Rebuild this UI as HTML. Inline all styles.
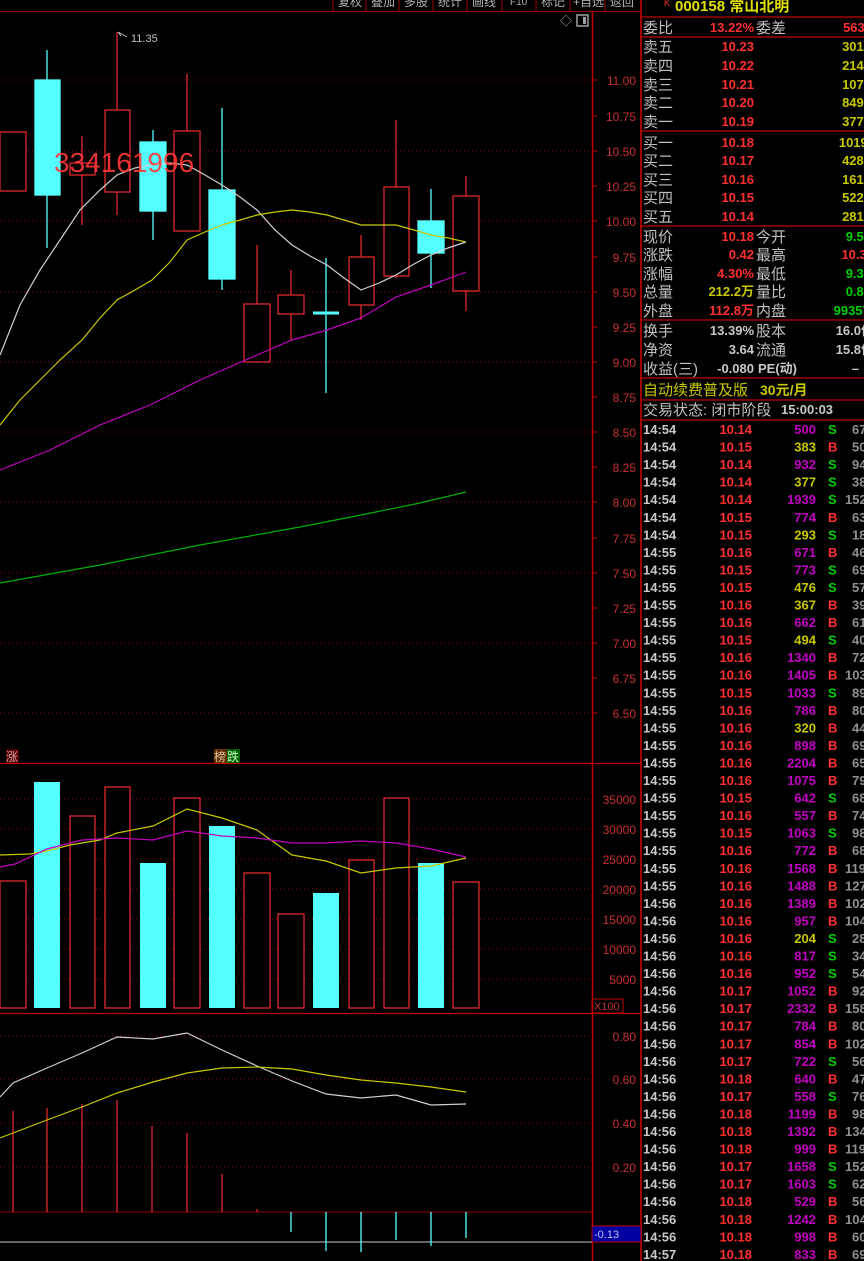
<!DOCTYPE html>
<html><head><meta charset="utf-8"><style>
html,body{margin:0;padding:0;background:#000;width:864px;height:1261px;overflow:hidden}
svg{display:block}
text{font-family:"Liberation Sans","Noto Sans CJK SC",sans-serif}
.ax{fill:#c83030;font-size:12px;text-anchor:end}
.lb{fill:#c0c0c0;font-size:15px}
.n{font-size:13px;font-weight:bold}
.r{fill:#ff3030}.y{fill:#c8c800}.g{fill:#00d000}.w{fill:#c8c8c8}.m{fill:#c000c0}
.e{text-anchor:end}
</style></head><body>
<svg width="864" height="1261" viewBox="0 0 864 1261" xmlns="http://www.w3.org/2000/svg">
<rect width="864" height="1261" fill="#000"/>
<!-- toolbar -->
<g stroke="#a00000" stroke-width="1">
<line x1="333" y1="0" x2="333" y2="11"/><line x1="366" y1="0" x2="366" y2="11"/><line x1="399" y1="0" x2="399" y2="11"/><line x1="433" y1="0" x2="433" y2="11"/><line x1="467" y1="0" x2="467" y2="11"/><line x1="502" y1="0" x2="502" y2="11"/><line x1="536" y1="0" x2="536" y2="11"/><line x1="570" y1="0" x2="570" y2="11"/><line x1="605" y1="0" x2="605" y2="11"/>
<line x1="0" y1="11.5" x2="641" y2="11.5"/>
</g>
<g fill="#b0b0b0" font-size="12"><text x="338" y="6">复权</text><text x="371" y="6">叠加</text><text x="404" y="6">多股</text><text x="438" y="6">统计</text><text x="472" y="6">画线</text><text x="510" y="5" font-size="10">F10</text><text x="541" y="6">标记</text><text x="573" y="6">+自选</text><text x="610" y="6">返回</text></g>
<text x="560" y="25" fill="#a0a0a0" font-size="12">◇</text>
<rect x="577" y="15" width="11" height="11" fill="none" stroke="#a0a0a0" stroke-width="1.5"/><rect x="583" y="17" width="3" height="7" fill="#a0a0a0"/>
<!-- main axis -->
<line x1="592.5" y1="12" x2="592.5" y2="1261" stroke="#c00000" stroke-width="1.5"/>
<line x1="641" y1="0" x2="641" y2="1261" stroke="#a00000" stroke-width="2"/>
<!-- price grid -->
<g stroke="#900000" stroke-dasharray="1,3">
<line x1="0" y1="80" x2="592" y2="80"/><line x1="0" y1="151" x2="592" y2="151"/><line x1="0" y1="221" x2="592" y2="221"/><line x1="0" y1="292" x2="592" y2="292"/><line x1="0" y1="362" x2="592" y2="362"/><line x1="0" y1="432" x2="592" y2="432"/><line x1="0" y1="502" x2="592" y2="502"/><line x1="0" y1="573" x2="592" y2="573"/><line x1="0" y1="643" x2="592" y2="643"/><line x1="0" y1="713" x2="592" y2="713"/>
</g>
<g class="ax">
<text x="636" y="85">11.00</text><text x="636" y="121">10.75</text><text x="636" y="156">10.50</text><text x="636" y="191">10.25</text><text x="636" y="226">10.00</text><text x="636" y="262">9.75</text><text x="636" y="297">9.50</text><text x="636" y="332">9.25</text><text x="636" y="367">9.00</text><text x="636" y="402">8.75</text><text x="636" y="437">8.50</text><text x="636" y="472">8.25</text><text x="636" y="507">8.00</text><text x="636" y="543">7.75</text><text x="636" y="578">7.50</text><text x="636" y="613">7.25</text><text x="636" y="648">7.00</text><text x="636" y="683">6.75</text><text x="636" y="718">6.50</text>
</g>
<g stroke="#c00000"><line x1="592" y1="80" x2="597" y2="80"/><line x1="592" y1="116" x2="597" y2="116"/><line x1="592" y1="151" x2="597" y2="151"/><line x1="592" y1="186" x2="597" y2="186"/><line x1="592" y1="221" x2="597" y2="221"/><line x1="592" y1="257" x2="597" y2="257"/><line x1="592" y1="292" x2="597" y2="292"/><line x1="592" y1="327" x2="597" y2="327"/><line x1="592" y1="362" x2="597" y2="362"/><line x1="592" y1="397" x2="597" y2="397"/><line x1="592" y1="432" x2="597" y2="432"/><line x1="592" y1="467" x2="597" y2="467"/><line x1="592" y1="502" x2="597" y2="502"/><line x1="592" y1="538" x2="597" y2="538"/><line x1="592" y1="573" x2="597" y2="573"/><line x1="592" y1="608" x2="597" y2="608"/><line x1="592" y1="643" x2="597" y2="643"/><line x1="592" y1="678" x2="597" y2="678"/><line x1="592" y1="713" x2="597" y2="713"/></g>
<!-- candles -->
<g stroke="#e02828" stroke-width="1.3" fill="#000">
<rect x="0" y="132" width="26" height="59"/>
<line x1="82" y1="136" x2="82" y2="225"/><rect x="70" y="163" width="25" height="12"/>
<line x1="117" y1="32" x2="117" y2="215"/><rect x="105" y="110" width="25" height="82"/>
<line x1="187" y1="74" x2="187" y2="231"/><rect x="174" y="131" width="26" height="100"/>
<line x1="257" y1="245" x2="257" y2="363"/><rect x="244" y="304" width="26" height="58"/>
<line x1="291" y1="270" x2="291" y2="340"/><rect x="278" y="295" width="26" height="19"/>
<line x1="361" y1="235" x2="361" y2="320"/><rect x="349" y="257" width="25" height="48"/>
<line x1="396" y1="120" x2="396" y2="278"/><rect x="384" y="187" width="25" height="89"/>
<line x1="466" y1="176" x2="466" y2="311"/><rect x="453" y="196" width="26" height="95"/>
</g>
<g stroke="#54ffff" stroke-width="1.3" fill="#54ffff">
<line x1="47" y1="50" x2="47" y2="248"/><rect x="35" y="80" width="25" height="115"/>
<line x1="153" y1="130" x2="153" y2="240"/><rect x="140" y="142" width="26" height="69"/>
<line x1="222" y1="108" x2="222" y2="290"/><rect x="209" y="190" width="26" height="89"/>
<line x1="326" y1="258" x2="326" y2="393"/><line x1="313" y1="313" x2="339" y2="313" stroke-width="3"/>
<line x1="431" y1="189" x2="431" y2="288"/><rect x="418" y="221" width="26" height="32"/>
</g>
<!-- MAs -->
<g fill="none" stroke-width="1.2">
<polyline stroke="#d0d0d0" points="0,355 20,305 40,270 60,240 80,210 100,190 117,175 135,168 150,165 170,163 187,165 205,175 222,185 240,197 257,210 275,230 292,245 310,256 327,265 344,278 361,290 379,283 396,275 414,264 431,255 448,248 466,242"/>
<polyline stroke="#c8c800" points="0,425 20,400 40,380 60,360 82,340 100,318 117,300 135,290 152,280 170,262 187,240 205,232 222,225 240,220 257,215 275,212 292,210 310,212 327,215 344,220 361,225 379,225 396,225 414,230 431,235 448,238 466,242"/>
<polyline stroke="#c000c0" points="0,470 50,450 100,425 150,405 200,380 257,355 292,340 327,330 361,318 396,297 431,285 466,272"/>
<polyline stroke="#00b000" points="0,583 100,565 200,545 300,527 361,515 420,503 466,492"/>
</g>
<path d="M118 32 L121 36 M118 32 L127 37" stroke="#c0c0c0" fill="none"/>
<text x="131" y="42" fill="#c0c0c0" font-size="11">11.35</text>
<text x="54" y="172" fill="#ff3838" font-size="28" opacity="0.9">334161996</text>
<!-- volume panel -->
<line x1="0" y1="763.5" x2="641" y2="763.5" stroke="#c00000" stroke-width="1.2"/>
<line x1="0" y1="1013.5" x2="641" y2="1013.5" stroke="#c00000" stroke-width="1.2"/>
<rect x="6" y="749" width="13" height="14" fill="#500000"/><text x="6" y="761" fill="#e0a0a0" font-size="12">涨</text>
<rect x="214" y="749" width="13" height="14" fill="#603000"/><text x="214" y="761" fill="#e0c0a0" font-size="12">榜</text>
<rect x="227" y="749" width="13" height="14" fill="#006000"/><text x="227" y="761" fill="#c0ffc0" font-size="12">跌</text>
<g stroke="#900000" stroke-dasharray="1,3">
<line x1="0" y1="799" x2="592" y2="799"/><line x1="0" y1="829" x2="592" y2="829"/><line x1="0" y1="859" x2="592" y2="859"/><line x1="0" y1="889" x2="592" y2="889"/><line x1="0" y1="919" x2="592" y2="919"/><line x1="0" y1="949" x2="592" y2="949"/><line x1="0" y1="979" x2="592" y2="979"/>
</g>
<g class="ax"><text x="636" y="804">35000</text><text x="636" y="834">30000</text><text x="636" y="864">25000</text><text x="636" y="894">20000</text><text x="636" y="924">15000</text><text x="636" y="954">10000</text><text x="636" y="984">5000</text></g>
<rect x="592" y="999" width="31" height="14" fill="none" stroke="#c00000"/><text x="594" y="1010" fill="#c03030" font-size="11">X100</text>
<g stroke="#e02828" stroke-width="1.3" fill="#000">
<rect x="0" y="881" width="26" height="127"/><rect x="70" y="816" width="25" height="192"/><rect x="105" y="787" width="25" height="221"/><rect x="174" y="798" width="26" height="210"/><rect x="244" y="873" width="26" height="135"/><rect x="278" y="914" width="26" height="94"/><rect x="349" y="860" width="25" height="148"/><rect x="384" y="798" width="25" height="210"/><rect x="453" y="882" width="26" height="126"/>
</g>
<g fill="#54ffff"><rect x="34" y="782" width="26" height="226"/><rect x="140" y="863" width="26" height="145"/><rect x="209" y="826" width="26" height="182"/><rect x="313" y="893" width="26" height="115"/><rect x="418" y="863" width="26" height="145"/></g>
<g fill="none" stroke-width="1.2">
<polyline stroke="#c8c800" points="0,855 30,854 47,851 70,845 100,840 117,833 153,826 187,809 222,818 257,830 292,855 326,861 361,873 396,868 431,866 466,858"/>
<polyline stroke="#c000c0" points="0,867 15,864 47,849 82,840 117,838 153,840 187,831 222,836 257,838 292,843 326,843 361,841 396,843 431,849 466,857"/>
</g>
<!-- MACD panel -->
<g stroke="#900000" stroke-dasharray="1,3">
<line x1="0" y1="1036" x2="592" y2="1036"/><line x1="0" y1="1079" x2="592" y2="1079"/><line x1="0" y1="1123" x2="592" y2="1123"/><line x1="0" y1="1167" x2="592" y2="1167"/>
</g>
<line x1="0" y1="1212" x2="592" y2="1212" stroke="#900000"/>
<g class="ax"><text x="636" y="1041">0.80</text><text x="636" y="1084">0.60</text><text x="636" y="1128">0.40</text><text x="636" y="1172">0.20</text></g>
<rect x="592" y="1226" width="49" height="16" fill="#0000a0" stroke="#c00000"/><text x="594" y="1238" fill="#c0c0ff" font-size="11">-0.13</text>
<line x1="0" y1="1242" x2="592" y2="1242" stroke="#a0a0a0" stroke-width="1.3"/>
<g stroke="#e02828" stroke-width="1.3">
<line x1="13" y1="1111" x2="13" y2="1212"/><line x1="47" y1="1108" x2="47" y2="1212"/><line x1="82" y1="1104" x2="82" y2="1212"/><line x1="117" y1="1100" x2="117" y2="1212"/><line x1="152" y1="1126" x2="152" y2="1212"/><line x1="187" y1="1133" x2="187" y2="1212"/><line x1="222" y1="1174" x2="222" y2="1212"/><line x1="257" y1="1209" x2="257" y2="1212"/>
</g>
<g stroke="#54ffff" stroke-width="1.3">
<line x1="291" y1="1212" x2="291" y2="1232"/><line x1="326" y1="1212" x2="326" y2="1251"/><line x1="361" y1="1212" x2="361" y2="1252"/><line x1="396" y1="1212" x2="396" y2="1240"/><line x1="431" y1="1212" x2="431" y2="1246"/><line x1="466" y1="1212" x2="466" y2="1238"/>
</g>
<g fill="none" stroke-width="1.2">
<polyline stroke="#d0d0d0" points="0,1097 13,1083 47,1068 82,1053 117,1037 153,1039 187,1033 222,1050 257,1066 292,1081 326,1094 361,1098 396,1095 431,1105 466,1104"/>
<polyline stroke="#c8c800" points="0,1138 13,1133 47,1120 82,1107 117,1093 153,1082 187,1073 222,1068 257,1067 292,1069 326,1075 361,1080 396,1083 431,1087 466,1092"/>
</g>
<!-- right panel lines -->
<g stroke="#a00000" stroke-width="1.5">
<line x1="641" y1="17" x2="864" y2="17"/><line x1="641" y1="37" x2="864" y2="37"/><line x1="641" y1="131" x2="864" y2="131"/><line x1="641" y1="226" x2="864" y2="226"/><line x1="641" y1="320" x2="864" y2="320"/><line x1="641" y1="378" x2="864" y2="378"/><line x1="641" y1="400" x2="864" y2="400"/><line x1="641" y1="420" x2="864" y2="420"/>
</g>
<text x="664" y="6" fill="#ff3030" font-size="9">K</text>
<text x="675" y="11" fill="#e0e000" font-size="15" font-weight="bold">000158 常山北明</text>
<g class="lb">
<text x="643" y="33">委比</text><text x="756" y="33">委差</text>
<text x="643" y="52">卖五</text><text x="643" y="71">卖四</text><text x="643" y="90">卖三</text><text x="643" y="108">卖二</text><text x="643" y="127">卖一</text>
<text x="643" y="148">买一</text><text x="643" y="166">买二</text><text x="643" y="185">买三</text><text x="643" y="203">买四</text><text x="643" y="222">买五</text>
<text x="643" y="242">现价</text><text x="756" y="242">今开</text><text x="643" y="260">涨跌</text><text x="756" y="260">最高</text><text x="643" y="279">涨幅</text><text x="756" y="279">最低</text><text x="643" y="297">总量</text><text x="756" y="297">量比</text><text x="643" y="316">外盘</text><text x="756" y="316">内盘</text>
<text x="643" y="336">换手</text><text x="756" y="336">股本</text><text x="643" y="355">净资</text><text x="756" y="355">流通</text><text x="643" y="374">收益(三)</text>
<text x="643" y="415">交易状态: 闭市阶段</text>
</g>
<text x="643" y="395" fill="#c8c800" font-size="15">自动续费普及版</text><text x="760" y="395" fill="#c8c800" font-size="14" font-weight="bold">30元/月</text>
<text x="781" y="414" class="n w">15:00:03</text>
<g class="n e">
<text x="754" y="32" class="r">13.22%</text><text x="872" y="32" class="r">5638</text>
<text x="754" y="51" class="r">10.23</text><text x="871" y="51" class="y">3014</text>
<text x="754" y="70" class="r">10.22</text><text x="871" y="70" class="y">2148</text>
<text x="754" y="89" class="r">10.21</text><text x="871" y="89" class="y">1078</text>
<text x="754" y="107" class="r">10.20</text><text x="871" y="107" class="y">8491</text>
<text x="754" y="126" class="r">10.19</text><text x="871" y="126" class="y">3773</text>
<text x="754" y="147" class="r">10.18</text><text x="875" y="147" class="y">10196</text>
<text x="754" y="165" class="r">10.17</text><text x="871" y="165" class="y">4287</text>
<text x="754" y="184" class="r">10.16</text><text x="871" y="184" class="y">1612</text>
<text x="754" y="202" class="r">10.15</text><text x="871" y="202" class="y">5229</text>
<text x="754" y="221" class="r">10.14</text><text x="871" y="221" class="y">2818</text>
<text x="754" y="241" class="r">10.18</text><text x="871" y="241" class="g">9.50</text>
<text x="754" y="259" class="r">0.42</text><text x="874" y="259" class="r">10.33</text>
<text x="754" y="278" class="r">4.30%</text><text x="871" y="278" class="g">9.35</text>
<text x="754" y="296" class="y">212.2万</text><text x="871" y="296" class="g">0.89</text>
<text x="754" y="315" class="r">112.8万</text><text x="877" y="315" class="g">993579</text>
<text x="754" y="335" class="w">13.39%</text><text x="874" y="335" class="w">16.0亿</text>
<text x="754" y="354" class="w">3.64</text><text x="874" y="354" class="w">15.8亿</text>
<text x="754" y="373" class="w">-0.080</text><text x="859" y="373" class="w">–</text>
</g>
<text x="758" y="373" class="n w">PE(动)</text>
<!-- trade list -->
<g class="n">
<g class="w">
<text x="643" y="434">14:54</text><text x="643" y="451.6">14:54</text><text x="643" y="469.1">14:54</text><text x="643" y="486.7">14:54</text><text x="643" y="504.2">14:54</text><text x="643" y="521.8">14:54</text><text x="643" y="539.3">14:54</text><text x="643" y="556.9">14:55</text><text x="643" y="574.4">14:55</text><text x="643" y="592">14:55</text><text x="643" y="609.5">14:55</text><text x="643" y="627.1">14:55</text><text x="643" y="644.6">14:55</text><text x="643" y="662.2">14:55</text><text x="643" y="679.7">14:55</text><text x="643" y="697.3">14:55</text><text x="643" y="714.8">14:55</text><text x="643" y="732.4">14:55</text><text x="643" y="749.9">14:55</text><text x="643" y="767.5">14:55</text><text x="643" y="785">14:55</text><text x="643" y="802.6">14:55</text><text x="643" y="820.1">14:55</text><text x="643" y="837.7">14:55</text><text x="643" y="855.2">14:55</text><text x="643" y="872.8">14:55</text><text x="643" y="890.3">14:55</text><text x="643" y="907.9">14:56</text><text x="643" y="925.4">14:56</text><text x="643" y="943">14:56</text><text x="643" y="960.5">14:56</text><text x="643" y="978.1">14:56</text><text x="643" y="995.6">14:56</text><text x="643" y="1013.2">14:56</text><text x="643" y="1030.7">14:56</text><text x="643" y="1048.3">14:56</text><text x="643" y="1065.8">14:56</text><text x="643" y="1083.4">14:56</text><text x="643" y="1100.9">14:56</text><text x="643" y="1118.5">14:56</text><text x="643" y="1136">14:56</text><text x="643" y="1153.6">14:56</text><text x="643" y="1171.1">14:56</text><text x="643" y="1188.7">14:56</text><text x="643" y="1206.2">14:56</text><text x="643" y="1223.8">14:56</text><text x="643" y="1241.3">14:56</text><text x="643" y="1258.9">14:57</text>
</g>
<g class="r e">
<text x="752" y="434">10.14</text><text x="752" y="451.6">10.15</text><text x="752" y="469.1">10.14</text><text x="752" y="486.7">10.14</text><text x="752" y="504.2">10.14</text><text x="752" y="521.8">10.15</text><text x="752" y="539.3">10.15</text><text x="752" y="556.9">10.16</text><text x="752" y="574.4">10.15</text><text x="752" y="592">10.15</text><text x="752" y="609.5">10.16</text><text x="752" y="627.1">10.16</text><text x="752" y="644.6">10.15</text><text x="752" y="662.2">10.16</text><text x="752" y="679.7">10.16</text><text x="752" y="697.3">10.15</text><text x="752" y="714.8">10.16</text><text x="752" y="732.4">10.16</text><text x="752" y="749.9">10.16</text><text x="752" y="767.5">10.16</text><text x="752" y="785">10.16</text><text x="752" y="802.6">10.15</text><text x="752" y="820.1">10.16</text><text x="752" y="837.7">10.15</text><text x="752" y="855.2">10.16</text><text x="752" y="872.8">10.16</text><text x="752" y="890.3">10.16</text><text x="752" y="907.9">10.16</text><text x="752" y="925.4">10.16</text><text x="752" y="943">10.16</text><text x="752" y="960.5">10.16</text><text x="752" y="978.1">10.16</text><text x="752" y="995.6">10.17</text><text x="752" y="1013.2">10.17</text><text x="752" y="1030.7">10.17</text><text x="752" y="1048.3">10.17</text><text x="752" y="1065.8">10.17</text><text x="752" y="1083.4">10.18</text><text x="752" y="1100.9">10.17</text><text x="752" y="1118.5">10.18</text><text x="752" y="1136">10.18</text><text x="752" y="1153.6">10.18</text><text x="752" y="1171.1">10.17</text><text x="752" y="1188.7">10.17</text><text x="752" y="1206.2">10.18</text><text x="752" y="1223.8">10.18</text><text x="752" y="1241.3">10.18</text><text x="752" y="1258.9">10.18</text>
</g>
<g class="e">
<text x="816" y="434" class="m">500</text><text x="816" y="451.6" class="y">383</text><text x="816" y="469.1" class="m">932</text><text x="816" y="486.7" class="y">377</text><text x="816" y="504.2" class="m">1939</text><text x="816" y="521.8" class="m">774</text><text x="816" y="539.3" class="y">293</text><text x="816" y="556.9" class="m">671</text><text x="816" y="574.4" class="m">773</text><text x="816" y="592" class="y">476</text><text x="816" y="609.5" class="y">367</text><text x="816" y="627.1" class="m">662</text><text x="816" y="644.6" class="y">494</text><text x="816" y="662.2" class="m">1340</text><text x="816" y="679.7" class="m">1405</text><text x="816" y="697.3" class="m">1033</text><text x="816" y="714.8" class="m">786</text><text x="816" y="732.4" class="y">320</text><text x="816" y="749.9" class="m">898</text><text x="816" y="767.5" class="m">2204</text><text x="816" y="785" class="m">1075</text><text x="816" y="802.6" class="m">642</text><text x="816" y="820.1" class="m">557</text><text x="816" y="837.7" class="m">1063</text><text x="816" y="855.2" class="m">772</text><text x="816" y="872.8" class="m">1568</text><text x="816" y="890.3" class="m">1488</text><text x="816" y="907.9" class="m">1389</text><text x="816" y="925.4" class="m">957</text><text x="816" y="943" class="y">204</text><text x="816" y="960.5" class="m">817</text><text x="816" y="978.1" class="m">952</text><text x="816" y="995.6" class="m">1052</text><text x="816" y="1013.2" class="m">2332</text><text x="816" y="1030.7" class="m">784</text><text x="816" y="1048.3" class="m">854</text><text x="816" y="1065.8" class="m">722</text><text x="816" y="1083.4" class="m">640</text><text x="816" y="1100.9" class="m">558</text><text x="816" y="1118.5" class="m">1199</text><text x="816" y="1136" class="m">1392</text><text x="816" y="1153.6" class="m">999</text><text x="816" y="1171.1" class="m">1658</text><text x="816" y="1188.7" class="m">1603</text><text x="816" y="1206.2" class="m">529</text><text x="816" y="1223.8" class="m">1242</text><text x="816" y="1241.3" class="m">998</text><text x="816" y="1258.9" class="m">833</text>
</g>
<g>
<text x="828" y="434" class="g">S</text><text x="828" y="451.6" class="r">B</text><text x="828" y="469.1" class="g">S</text><text x="828" y="486.7" class="g">S</text><text x="828" y="504.2" class="g">S</text><text x="828" y="521.8" class="r">B</text><text x="828" y="539.3" class="g">S</text><text x="828" y="556.9" class="r">B</text><text x="828" y="574.4" class="g">S</text><text x="828" y="592" class="g">S</text><text x="828" y="609.5" class="r">B</text><text x="828" y="627.1" class="r">B</text><text x="828" y="644.6" class="g">S</text><text x="828" y="662.2" class="r">B</text><text x="828" y="679.7" class="r">B</text><text x="828" y="697.3" class="g">S</text><text x="828" y="714.8" class="r">B</text><text x="828" y="732.4" class="r">B</text><text x="828" y="749.9" class="r">B</text><text x="828" y="767.5" class="r">B</text><text x="828" y="785" class="r">B</text><text x="828" y="802.6" class="g">S</text><text x="828" y="820.1" class="r">B</text><text x="828" y="837.7" class="g">S</text><text x="828" y="855.2" class="r">B</text><text x="828" y="872.8" class="r">B</text><text x="828" y="890.3" class="r">B</text><text x="828" y="907.9" class="r">B</text><text x="828" y="925.4" class="r">B</text><text x="828" y="943" class="g">S</text><text x="828" y="960.5" class="g">S</text><text x="828" y="978.1" class="g">S</text><text x="828" y="995.6" class="r">B</text><text x="828" y="1013.2" class="r">B</text><text x="828" y="1030.7" class="r">B</text><text x="828" y="1048.3" class="r">B</text><text x="828" y="1065.8" class="g">S</text><text x="828" y="1083.4" class="r">B</text><text x="828" y="1100.9" class="g">S</text><text x="828" y="1118.5" class="r">B</text><text x="828" y="1136" class="r">B</text><text x="828" y="1153.6" class="r">B</text><text x="828" y="1171.1" class="g">S</text><text x="828" y="1188.7" class="g">S</text><text x="828" y="1206.2" class="r">B</text><text x="828" y="1223.8" class="r">B</text><text x="828" y="1241.3" class="r">B</text><text x="828" y="1258.9" class="r">B</text>
</g>
<g fill="#909090">
<text x="852" y="434">67</text><text x="852" y="451.6">50</text><text x="852" y="469.1">94</text><text x="852" y="486.7">38</text><text x="845" y="504.2">152</text><text x="852" y="521.8">63</text><text x="852" y="539.3">18</text><text x="852" y="556.9">46</text><text x="852" y="574.4">69</text><text x="852" y="592">57</text><text x="852" y="609.5">39</text><text x="852" y="627.1">61</text><text x="852" y="644.6">40</text><text x="852" y="662.2">72</text><text x="845" y="679.7">103</text><text x="852" y="697.3">89</text><text x="852" y="714.8">80</text><text x="852" y="732.4">44</text><text x="852" y="749.9">69</text><text x="852" y="767.5">65</text><text x="852" y="785">79</text><text x="852" y="802.6">68</text><text x="852" y="820.1">74</text><text x="852" y="837.7">98</text><text x="852" y="855.2">68</text><text x="845" y="872.8">119</text><text x="845" y="890.3">127</text><text x="845" y="907.9">102</text><text x="845" y="925.4">104</text><text x="852" y="943">28</text><text x="852" y="960.5">34</text><text x="852" y="978.1">54</text><text x="852" y="995.6">92</text><text x="845" y="1013.2">158</text><text x="852" y="1030.7">80</text><text x="845" y="1048.3">102</text><text x="852" y="1065.8">56</text><text x="852" y="1083.4">47</text><text x="852" y="1100.9">76</text><text x="852" y="1118.5">98</text><text x="845" y="1136">134</text><text x="845" y="1153.6">119</text><text x="845" y="1171.1">152</text><text x="852" y="1188.7">62</text><text x="852" y="1206.2">56</text><text x="845" y="1223.8">104</text><text x="852" y="1241.3">60</text><text x="852" y="1258.9">69</text>
</g>
</g>
</svg>
</body></html>
